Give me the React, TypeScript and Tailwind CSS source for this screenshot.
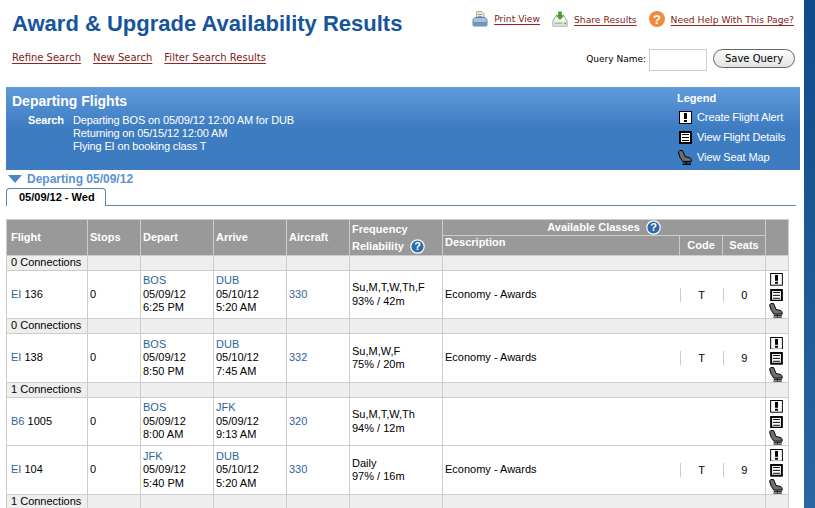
import React from 'react';

const AlertIcon = ({ className = '' }: { className?: string }) => (
  <svg width="13" height="13" viewBox="0 0 13 13" className={className}>
    <rect x="0.5" y="0.5" width="12" height="12" fill="#fff" stroke="#000" />
    <rect x="5" y="2" width="3" height="6" fill="#000" />
    <rect x="5" y="9" width="3" height="2" fill="#000" />
  </svg>
);

const DetailsIcon = ({ className = '' }: { className?: string }) => (
  <svg width="13" height="13" viewBox="0 0 13 13" className={className}>
    <rect x="1" y="1" width="11" height="11" fill="#fff" stroke="#000" strokeWidth="2" />
    <rect x="3" y="3" width="7" height="1" fill="#000" />
    <rect x="3" y="6" width="7" height="1" fill="#000" />
    <rect x="3" y="9" width="7" height="1" fill="#000" />
  </svg>
);

const SeatIcon = ({ className = '' }: { className?: string }) => (
  <svg width="14" height="15" viewBox="0 0 14 15" className={className}>
    <path d="M.6 1.6 L1.6 .6 L4.6 .6 L7 6.6 L12 7.8 Q13.6 8.8 13.4 11.4 L4.8 11.4 Q1.6 8 .6 3 Z" fill="#6e6e6e" stroke="#000" strokeWidth="1" />
    <path d="M8.5 12 V14 M4.5 13 H13 M4.5 14.5 H13" stroke="#000" strokeWidth="1" fill="none" />
  </svg>
);

const HelpIcon = () => (
  <svg width="15" height="15" viewBox="0 0 15 15" className="inline-block">
    <circle cx="7.5" cy="7.5" r="6.7" fill="#2d6aa8" stroke="#fff" strokeWidth="1.2" />
    <text x="7.5" y="11.3" textAnchor="middle" fontSize="11" fontWeight="700" fill="#fff" fontFamily="Liberation Sans">?</text>
  </svg>
);

const PrintIcon = () => (
  <svg width="16" height="16" viewBox="0 0 16 16">
    <path d="M4.5 .5 H10 L12 2.5 V8 H4.5 Z" fill="#efe6cf" stroke="#b8a988" />
    <path d="M6 3.5 H10 M6 5.5 H10" stroke="#7f9cc0" />
    <path d="M1 8.5 L3 6.5 H13 L15 8.5 V14 Q15 15 14 15 H2 Q1 15 1 14 Z" fill="#a9c1de" stroke="#5f83ad" />
    <rect x="1.5" y="11" width="13" height="3.5" fill="#6f93bd" />
  </svg>
);

const ShareIcon = () => (
  <svg width="16" height="16" viewBox="0 0 17 16">
    <path d="M1 10 L4.5 4.5 H12.5 L16 10 V15.5 H1 Z" fill="#f3f5f0" stroke="#8f9a90" />
    <rect x="1.5" y="10.5" width="14" height="4.5" fill="#dfe3dd" />
    <rect x="3" y="12" width="8" height="1" fill="#9aa39a" />
    <rect x="13" y="12" width="2" height="1.5" fill="#58b030" />
    <path d="M6.5 0 H10.5 V4 H13 L8.5 9 L4 4 H6.5 Z" fill="#4f9e2a" />
  </svg>
);

const OrangeHelp = () => (
  <svg width="16" height="16" viewBox="0 0 16 16">
    <circle cx="8" cy="8" r="8" fill="#f08a3c" />
    <text x="8" y="12.7" textAnchor="middle" fontSize="13" fontWeight="700" fill="#fff" fontFamily="Liberation Sans">?</text>
  </svg>
);

const RedLink = ({ children }: { children: React.ReactNode }) => (
  <a className="text-[#7c2320] text-[10px] leading-[12px] underline underline-offset-2 decoration-[#a0201c] font-['DejaVu_Sans',sans-serif] whitespace-nowrap">
    {children}
  </a>
);

const TopLink = ({ children }: { children: React.ReactNode }) => (
  <a className="text-[#7c2320] text-[9.2px] leading-[12px] underline underline-offset-2 decoration-[#a0201c] font-['DejaVu_Sans',sans-serif] whitespace-nowrap">
    {children}
  </a>
);

const A = ({ children }: { children: React.ReactNode }) => <span className="text-[#2f6396]">{children}</span>;

const cell = 'border border-[#ccc] align-middle';
const th = 'border border-[#ccc] font-bold text-white text-[11px]';

const ConnRow = ({ n }: { n: number }) => (
  <tr className="h-[15px] bg-[#eee]">
    <td className={`${cell} pl-[4px] whitespace-nowrap`}>{n} Connections</td>
    <td className={cell} />
    <td className={cell} />
    <td className={cell} />
    <td className={cell} />
    <td className={cell} />
    <td className={cell} colSpan={3} />
    <td className={cell} />
  </tr>
);

type Flight = {
  air: string;
  num: string;
  from: string;
  depDate: string;
  depTime: string;
  to: string;
  arrDate: string;
  arrTime: string;
  plane: string;
  freq: string;
  rel: string;
  seats?: string;
  h: string;
};

const FlightRow = ({ f }: { f: Flight }) => (
  <tr className={`${f.h} bg-white`}>
    <td className={`${cell} pl-[4px]`}>
      <A>{f.air}</A> {f.num}
    </td>
    <td className={`${cell} pl-[2px]`}>0</td>
    <td className={`${cell} pl-[2px]`}>
      <A>{f.from}</A>
      <br />
      {f.depDate}
      <br />
      {f.depTime}
    </td>
    <td className={`${cell} pl-[2px]`}>
      <A>{f.to}</A>
      <br />
      {f.arrDate}
      <br />
      {f.arrTime}
    </td>
    <td className={`${cell} pl-[2px]`}>
      <A>{f.plane}</A>
    </td>
    <td className={`${cell} pl-[2px]`}>
      {f.freq}
      <br />
      {f.rel}
    </td>
    <td className={`${cell} border-r-0 pl-[2px]`}>{f.seats ? 'Economy - Awards' : ''}</td>
    <td className={`${cell} border-x-0`}>
      {f.seats && <div className="h-[14px] border-l border-[#ccc] text-center leading-[14px]">T</div>}
    </td>
    <td className={`${cell} border-l-0`}>
      {f.seats && <div className="h-[14px] border-l border-[#ccc] text-center leading-[14px]">{f.seats}</div>}
    </td>
    <td className={cell}>
      <div className="flex h-[47px] flex-col items-center gap-[3px] pt-[2px] pr-[1px]">
        <AlertIcon />
        <DetailsIcon />
        <SeatIcon className="-mt-[1px] -ml-[1px]" />
      </div>
    </td>
  </tr>
);

const flights: Flight[] = [
  { air: 'EI', num: '136', from: 'BOS', depDate: '05/09/12', depTime: '6:25 PM', to: 'DUB', arrDate: '05/10/12', arrTime: '5:20 AM', plane: '330', freq: 'Su,M,T,W,Th,F', rel: '93% / 42m', seats: '0', h: 'h-[48px]' },
  { air: 'EI', num: '138', from: 'BOS', depDate: '05/09/12', depTime: '8:50 PM', to: 'DUB', arrDate: '05/10/12', arrTime: '7:45 AM', plane: '332', freq: 'Su,M,W,F', rel: '75% / 20m', seats: '9', h: 'h-[49px]' },
  { air: 'B6', num: '1005', from: 'BOS', depDate: '05/09/12', depTime: '8:00 AM', to: 'JFK', arrDate: '05/09/12', arrTime: '9:13 AM', plane: '320', freq: 'Su,M,T,W,Th', rel: '94% / 12m', h: 'h-[48px]' },
  { air: 'EI', num: '104', from: 'JFK', depDate: '05/09/12', depTime: '5:40 PM', to: 'DUB', arrDate: '05/10/12', arrTime: '5:20 AM', plane: '330', freq: 'Daily', rel: '97% / 16m', seats: '9', h: 'h-[49px]' },
];

export default function App() {
  return (
    <div className="flex h-[508px] w-[815px] overflow-hidden bg-white font-['Liberation_Sans',Arial,sans-serif] text-[11px] text-black">
      <div className="w-[804px] shrink-0 pl-[6px] pr-[4px]">
        {/* header */}
        <div className="flex h-[87px] justify-between">
          <div className="pl-[6px]">
            <h1 className="mt-[10px] text-[22px] leading-[28px] font-bold text-[#16549c] whitespace-nowrap">
              Award &amp; Upgrade Availability Results
            </h1>
            <div className="mt-[14px] flex gap-[12px]">
              <RedLink>Refine Search</RedLink>
              <RedLink>New Search</RedLink>
              <RedLink>Filter Search Results</RedLink>
            </div>
          </div>
          <div className="flex flex-col items-end pr-[5px]">
            <div className="mt-[11px] flex items-center pr-[1px]">
              <PrintIcon />
              <span className="ml-[6px] -mt-[3px]"><TopLink>Print View</TopLink></span>
              <span className="ml-[12px]"><ShareIcon /></span>
              <span className="ml-[6px]"><TopLink>Share Results</TopLink></span>
              <span className="ml-[12px]"><OrangeHelp /></span>
              <span className="ml-[6px]"><TopLink>Need Help With This Page?</TopLink></span>
            </div>
            <div className="mt-[21px] flex items-center">
              <span className="text-[9px] font-['DejaVu_Sans',sans-serif]">Query Name:</span>
              <input className="ml-[3px] h-[22px] w-[58px] border border-[#ccc] bg-white" />
              <button className="ml-[6px] -mt-[3px] h-[19px] w-[82px] rounded-full border border-[#666] bg-gradient-to-b from-white to-[#e2e2e2] text-[10px] font-['DejaVu_Sans',sans-serif]">
                Save Query
              </button>
            </div>
          </div>
        </div>

        {/* blue panel */}
        <div className="flex h-[83px] justify-between bg-gradient-to-b from-[#5f9adb] via-[#3e7cc1] via-50% to-[#3e7cc1] text-white">
          <div className="pl-[6px] pt-[6px]">
            <div className="text-[14px] leading-[16px] font-bold">Departing Flights</div>
            <div className="mt-[5px] flex leading-[13px] tracking-[-0.14px]">
              <div className="w-[61px] pl-[16px] font-bold">Search</div>
              <div>
                Departing BOS on 05/09/12 12:00 AM for DUB
                <br />
                Returning on 05/15/12 12:00 AM
                <br />
                Flying EI on booking class T
              </div>
            </div>
          </div>
          <div className="w-[123px] pt-[5px]">
            <div className="font-bold leading-[13px]">Legend</div>
            <div className="mt-[6px] flex flex-col gap-[7px] tracking-[-0.1px]">
              <div className="flex h-[13px] items-center gap-[5px] pl-[2px]"><AlertIcon />Create Flight Alert</div>
              <div className="flex h-[13px] items-center gap-[5px] pl-[2px]"><DetailsIcon />View Flight Details</div>
              <div className="flex h-[13px] items-center gap-[5px] pl-[1px]"><SeatIcon />View Seat Map</div>
            </div>
          </div>
        </div>

        {/* departing */}
        <div className="mt-[1px] flex h-[15px] items-center pl-[2px]">
          <svg width="14" height="8" viewBox="0 0 14 8"><path d="M0 0 H14 L7 8 Z" fill="#4c86c6" /></svg>
          <span className="ml-[5px] text-[12px] font-bold text-[#5b92d0]">Departing 05/09/12</span>
        </div>
        <div className="mr-[4px] mt-[2px] h-[18px] border-b border-[#5b86b8]">
          <div className="h-[18px] w-[100px] rounded-t-[4px] border border-b-0 border-[#5b86b8] bg-white pl-[12px] text-[11px] leading-[17px] font-bold">
            05/09/12 - Wed
          </div>
        </div>

        {/* table */}
        <table className="mt-[13px] w-[782px] table-fixed border-collapse leading-[13.5px]">
          <colgroup>
            <col className="w-[81px]" />
            <col className="w-[53px]" />
            <col className="w-[73px]" />
            <col className="w-[73px]" />
            <col className="w-[63px]" />
            <col className="w-[93px]" />
            <col className="w-[237px]" />
            <col className="w-[43px]" />
            <col className="w-[43px]" />
            <col className="w-[23px]" />
          </colgroup>
          <thead className="bg-[#999]">
            <tr className="h-[15px]">
              <th rowSpan={2} className={`${th} text-left pl-[4px]`}>Flight</th>
              <th rowSpan={2} className={`${th} text-left pl-[2px]`}>Stops</th>
              <th rowSpan={2} className={`${th} text-left pl-[2px]`}>Depart</th>
              <th rowSpan={2} className={`${th} text-left pl-[2px]`}>Arrive</th>
              <th rowSpan={2} className={`${th} text-left pl-[2px]`}>Aircraft</th>
              <th rowSpan={2} className={`${th} text-left pl-[2px] leading-[17px]`}>
                Frequency
                <br />
                <span className="flex items-center gap-[6px]">Reliability <HelpIcon /></span>
              </th>
              <th colSpan={3} className={`${th} text-center`}>
                <span className="inline-flex items-center gap-[6px]">Available Classes <HelpIcon /></span>
              </th>
              <th rowSpan={2} className={th} />
            </tr>
            <tr className="h-[20px]">
              <th className={`${th} text-left pl-[2px] align-top leading-[13px]`}>Description</th>
              <th className={`${th} text-center`}>Code</th>
              <th className={`${th} text-center`}>Seats</th>
            </tr>
          </thead>
          <tbody>
            <ConnRow n={0} />
            <FlightRow f={flights[0]} />
            <ConnRow n={0} />
            <FlightRow f={flights[1]} />
            <ConnRow n={1} />
            <FlightRow f={flights[2]} />
            <FlightRow f={flights[3]} />
            <ConnRow n={1} />
          </tbody>
        </table>
      </div>
      <div className="w-[11px] shrink-0 bg-gradient-to-b from-[#0f4a8a] to-[#2a66a3]" />
    </div>
  );
}
